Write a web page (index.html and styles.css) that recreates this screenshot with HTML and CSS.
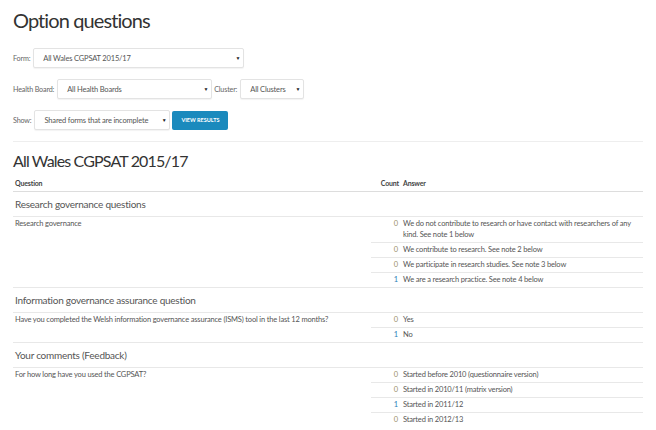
FILE: index.html
```html
<!DOCTYPE html>
<html>
<head>
<meta charset="utf-8">
<link rel="stylesheet" href="styles.css">
</head>
<body>
<div class="page">
  <h1 class="title">Option questions</h1>
  <div class="filters">
    <div class="frow">
      <span class="lbl">Form:</span>
      <div class="sel sel-form"><span>All Wales CGPSAT 2015/17</span><span class="arr">&#9660;</span></div>
    </div>
    <div class="frow">
      <span class="lbl">Health Board:</span>
      <div class="sel sel-hb"><span>All Health Boards</span><span class="arr">&#9660;</span></div>
      <span class="lbl">Cluster:</span>
      <div class="sel sel-cl"><span>All Clusters</span><span class="arr">&#9660;</span></div>
    </div>
    <div class="frow">
      <span class="lbl">Show:</span>
      <div class="sel sel-show"><span>Shared forms that are incomplete</span><span class="arr">&#9660;</span></div>
      <button class="btn">VIEW RESULTS</button>
    </div>
  </div>
  <div class="rule"></div>
  <h2 class="subtitle">All Wales CGPSAT 2015/17</h2>
  <table class="tbl">
    <colgroup><col class="c-q"><col class="c-n"><col class="c-a"></colgroup>
    <thead>
      <tr><th>Question</th><th class="num">Count</th><th>Answer</th></tr>
    </thead>
    <tbody>
      <tr class="sec"><td colspan="3">Research governance questions</td></tr>
      <tr><td rowspan="4">Research governance</td><td class="num zero">0</td><td>We do not contribute to research or have contact with researchers of any kind. See note 1 below</td></tr>
      <tr><td class="num zero">0</td><td>We contribute to research. See note 2 below</td></tr>
      <tr><td class="num zero">0</td><td>We participate in research studies. See note 3 below</td></tr>
      <tr><td class="num one">1</td><td>We are a research practice. See note 4 below</td></tr>
      <tr class="sec"><td colspan="3">Information governance assurance question</td></tr>
      <tr><td rowspan="2">Have you completed the Welsh information governance assurance (ISMS) tool in the last 12 months?</td><td class="num zero">0</td><td>Yes</td></tr>
      <tr><td class="num one">1</td><td>No</td></tr>
      <tr class="sec"><td colspan="3">Your comments (Feedback)</td></tr>
      <tr><td rowspan="4">For how long have you used the CGPSAT?</td><td class="num zero">0</td><td>Started before 2010 (questionnaire version)</td></tr>
      <tr><td class="num zero">0</td><td>Started in 2010/11 (matrix version)</td></tr>
      <tr><td class="num one">1</td><td>Started in 2011/12</td></tr>
      <tr><td class="num zero">0</td><td>Started in 2012/13</td></tr>
    </tbody>
  </table>
</div>
</body>
</html>
```

FILE: styles.css
```css
html, body { margin: 0; padding: 0; background: #fff; }
body { font-family: Lato, "Open Sans", sans-serif; color: #555; letter-spacing: -0.17px; }
.page { padding: 0 13px; width: 630px; }
.title { margin: 0; padding-top: 8px; font-size: 20px; font-weight: 400; color: #333; line-height: 24px; letter-spacing: -0.9px; }
.filters { margin-top: 16px; display: flex; flex-direction: column; gap: 11px; }
.frow { display: flex; align-items: center; gap: 2px; height: 20px; }
.lbl { font-size: 7.2px; color: #666; margin-right: 1px; }
.sel { height: 20px; box-sizing: border-box; border: 1px solid #e3e3e3; border-radius: 2px; background: #fff; box-shadow: 0 1px 1px rgba(0,0,0,0.05); display: flex; align-items: center; justify-content: space-between; padding: 0 3px 0 9px; font-size: 7.5px; color: #555; }
.arr { font-size: 5px; color: #222; }
.sel-form { width: 211px; }
.sel-hb { width: 155px; }
.sel-cl { width: 64px; }
.sel-show { width: 136px; }
.btn { height: 19px; width: 56px; border: none; border-radius: 2px; background: #1b8abd; color: #fff; font-family: Lato, sans-serif; font-size: 5.5px; font-weight: 700; padding: 0; letter-spacing: 0; }
.rule { height: 1px; background: #eee; margin-top: 11px; }
.subtitle { margin: 0; margin-top: 9px; font-size: 16px; font-weight: 400; color: #333; line-height: 20px; letter-spacing: -0.85px; }
.tbl { width: 630px; border-collapse: collapse; table-layout: fixed; margin-top: 3px; font-size: 7.5px; }
.c-q { width: 358px; }
.c-n { width: 30px; }
.c-a { width: 242px; }
.tbl th { font-weight: 700; text-align: left; font-size: 7px; color: #444; padding: 4px 2px 3px; line-height: 10px; border-bottom: 1px solid #ddd; }
.tbl th.num { text-align: right; }
.tbl td { padding: 2px 2px 1.5px; line-height: 10.5px; vertical-align: top; border-top: 1px solid #e8e8e8; }
.tbl tr.sec td { font-size: 10px; line-height: 14px; padding: 5px 2px 5px; color: #555; letter-spacing: -0.25px; }
.tbl td.num { text-align: right; padding-right: 3px; }
.zero { color: #9a8f6a; }
.one { color: #2b7cb5; }
```
